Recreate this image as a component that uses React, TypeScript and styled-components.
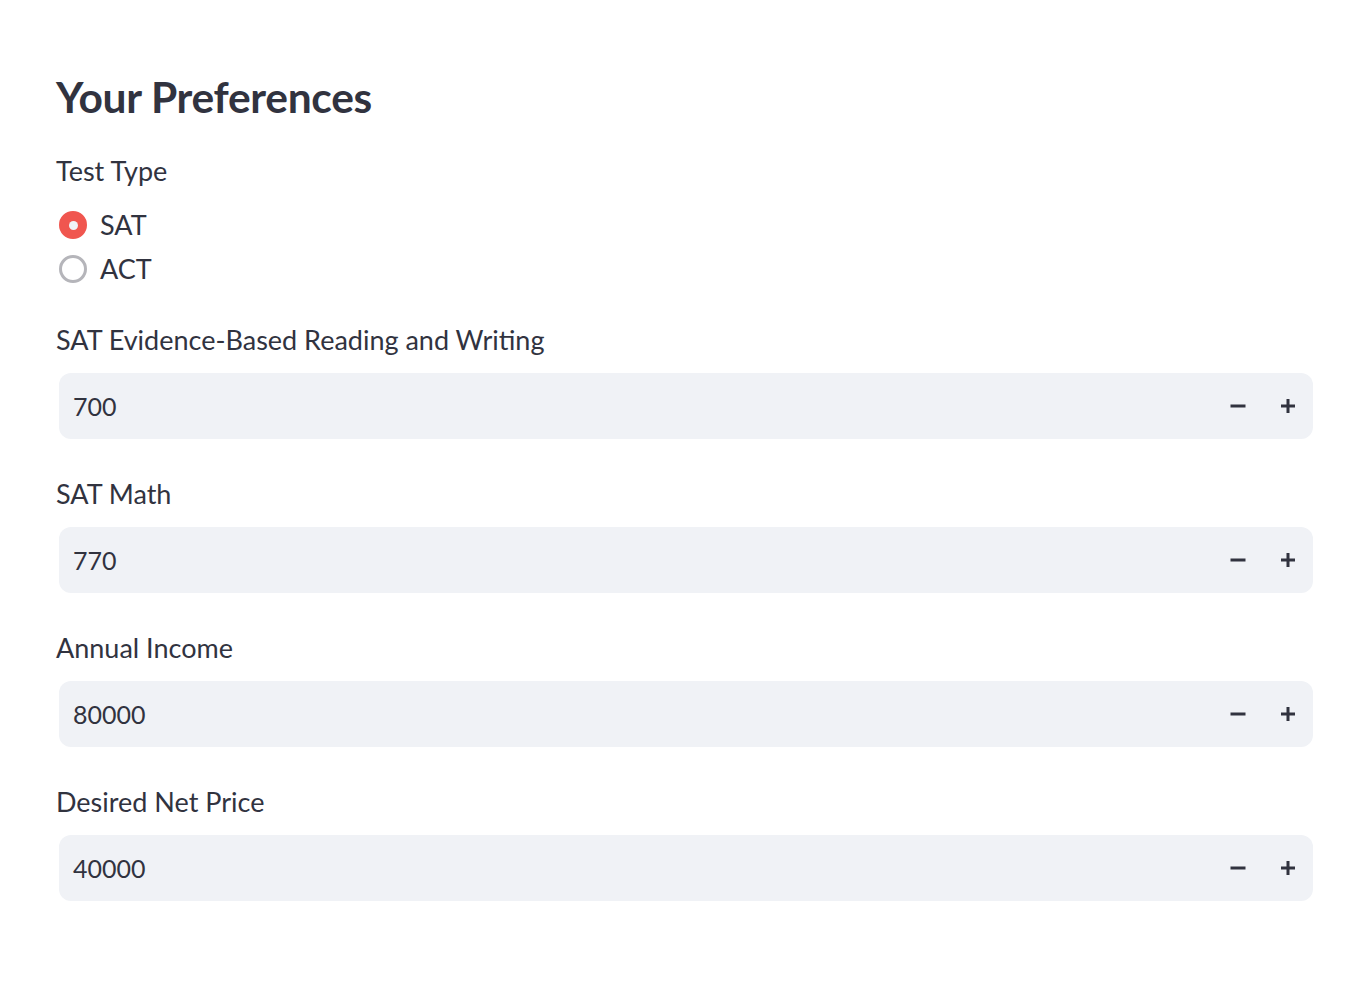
import * as React from "react";
import styled, { createGlobalStyle } from "styled-components";

const GlobalStyle = createGlobalStyle`
    body {
        margin: 0;
        background: #ffffff;
        font-family: "Source Sans Pro", Lato, "Liberation Sans", sans-serif;
        color: #31333f;
    }
`;

const Page = styled.div`
    padding: 67px 45px 0 56px;
    width: 1358px;
    box-sizing: border-box;
`;

const Heading = styled.h2`
    margin: 0 0 28px 0;
    font-size: 42.5px;
    font-weight: 700;
    line-height: 60px;
    letter-spacing: -0.3px;
`;

const Label = styled.div<{ gap?: number }>`
    font-size: 27px;
    line-height: 32px;
    margin-bottom: ${props => props.gap ?? 17}px;
`;

const RadioGroup = styled.div`
    display: flex;
    flex-direction: column;
    gap: 12px;
    margin-bottom: 39px;
`;

const RadioRow = styled.label`
    display: flex;
    align-items: center;
    gap: 13px;
    font-size: 27px;
    line-height: 32px;
    padding-left: 3px;
`;

const RadioDot = styled.span<{ checked?: boolean }>`
    width: 28px;
    height: 28px;
    border-radius: 50%;
    box-sizing: border-box;
    background: ${props => props.checked ? '#f0564f' : '#ffffff'};
    border: ${props => props.checked ? '9.5px solid #f0564f' : '3px solid #b5b5ba'};
    display: flex;
    align-items: center;
    justify-content: center;

    &::after {
        content: "";
        display: ${props => props.checked ? 'block' : 'none'};
        width: 9px;
        height: 9px;
        border-radius: 50%;
        background: #f0f2f6;
    }
`;

const Field = styled.div`
    margin-bottom: 39px;
`;

const InputBox = styled.div`
    margin-left: 3px;
    height: 66px;
    border-radius: 12px;
    background: #f0f2f6;
    display: flex;
    align-items: center;
    overflow: hidden;
`;

const Value = styled.div`
    flex: 1;
    padding-left: 14px;
    font-size: 25px;
    color: #31333f;
`;

const StepButton = styled.div`
    width: 50px;
    height: 100%;
    display: flex;
    align-items: center;
    justify-content: center;
    color: #31333f;
`;

const Minus = () => <svg width="16" height="16" viewBox="0 0 16 16">
    <rect x="0.5" y="6.5" width="15" height="3" fill="currentColor"/>
</svg>;

const Plus = () => <svg width="16" height="16" viewBox="0 0 16 16">
    <rect x="1" y="6.5" width="14" height="3" fill="currentColor"/>
    <rect x="6.5" y="1" width="3" height="14" fill="currentColor"/>
</svg>;

const fields = [
    { label: 'SAT Evidence-Based Reading and Writing', value: '700' },
    { label: 'SAT Math', value: '770' },
    { label: 'Annual Income', value: '80000' },
    { label: 'Desired Net Price', value: '40000' },
];

export default function App() {
    return <Page>
        <GlobalStyle/>
        <Heading>Your Preferences</Heading>
        <Label gap={22}>Test Type</Label>
        <RadioGroup>
            <RadioRow><RadioDot checked/>SAT</RadioRow>
            <RadioRow><RadioDot/>ACT</RadioRow>
        </RadioGroup>
        {fields.map((field, index) => <Field key={index}>
            <Label>{field.label}</Label>
            <InputBox>
                <Value>{field.value}</Value>
                <StepButton><Minus/></StepButton>
                <StepButton><Plus/></StepButton>
            </InputBox>
        </Field>)}
    </Page>;
}
